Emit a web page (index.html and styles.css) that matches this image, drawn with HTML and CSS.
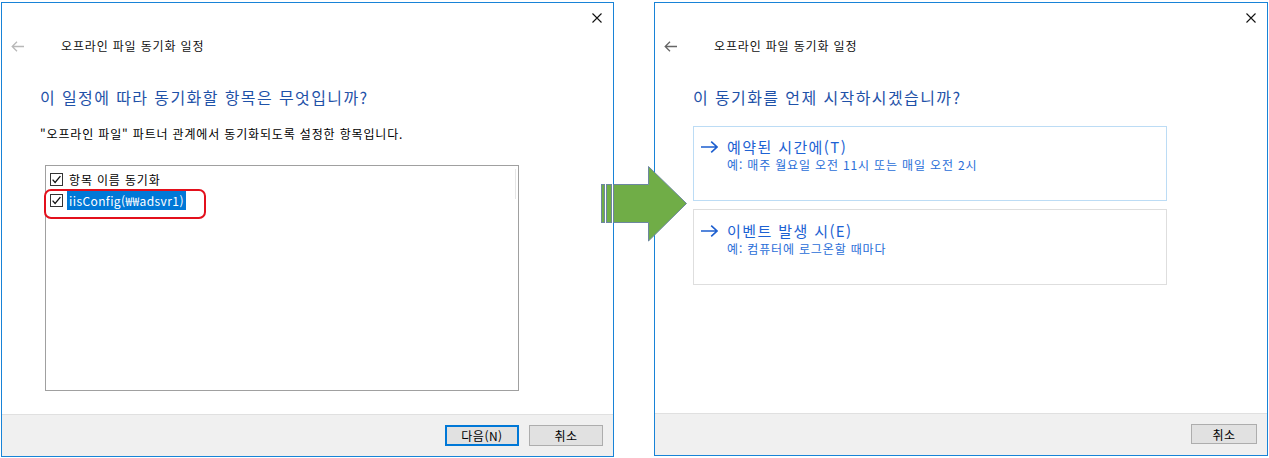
FILE: index.html
```html
<!DOCTYPE html>
<html lang="ko">
<head>
<meta charset="utf-8" />
<title>오프라인 파일 동기화 일정</title>
<link rel="stylesheet" href="styles.css">
</head>
<body>
<div class="dialog left-dlg">
	<div class="topbar">
		<svg class="close" width="10" height="10" viewBox="0 0 10 10"><path d="M0.5 0.5 L9.5 9.5 M9.5 0.5 L0.5 9.5" stroke="#111" stroke-width="1.1" fill="none"/></svg>
	</div>
	<div class="nav">
		<svg class="back off" width="13" height="11" viewBox="0 0 13 11"><path d="M1 5.5 H13 M6 0.8 L1.2 5.5 L6 10.2" fill="none" stroke-width="1.3"/></svg>
		<span class="title">오프라인 파일 동기화 일정</span>
	</div>
	<div class="main">
		<h1>이 일정에 따라 동기화할 항목은 무엇입니까?</h1>
		<p class="desc">"오프라인 파일" 파트너 관계에서 동기화되도록 설정한 항목입니다.</p>
		<div class="list">
			<div class="row">
				<svg class="chk" width="13" height="13" viewBox="0 0 13 13"><rect x="0.5" y="0.5" width="12" height="12" fill="#fff" stroke="#333"/><path d="M2.6 6.6 L5.1 9.4 L10.4 3.2" fill="none" stroke="#111" stroke-width="1.3"/></svg>
				<span class="label">항목 이름 동기화</span>
			</div>
			<div class="row">
				<svg class="chk" width="13" height="13" viewBox="0 0 13 13"><rect x="0.5" y="0.5" width="12" height="12" fill="#fff" stroke="#333"/><path d="M2.6 6.6 L5.1 9.4 L10.4 3.2" fill="none" stroke="#111" stroke-width="1.3"/></svg>
				<span class="label sel">iisConfig(₩₩adsvr1)</span>
			</div>
			<div class="mark"></div>
		</div>
	</div>
	<div class="footer">
		<button class="btn default">다음(N)</button>
		<button class="btn">취소</button>
	</div>
</div>

<div class="dialog right-dlg">
	<div class="topbar">
		<svg class="close" width="10" height="10" viewBox="0 0 10 10"><path d="M0.5 0.5 L9.5 9.5 M9.5 0.5 L0.5 9.5" stroke="#111" stroke-width="1.1" fill="none"/></svg>
	</div>
	<div class="nav">
		<svg class="back" width="13" height="11" viewBox="0 0 13 11"><path d="M1 5.5 H13 M6 0.8 L1.2 5.5 L6 10.2" fill="none" stroke-width="1.3"/></svg>
		<span class="title">오프라인 파일 동기화 일정</span>
	</div>
	<div class="main">
		<h1>이 동기화를 언제 시작하시겠습니까?</h1>
		<div class="opt hover">
			<svg class="go" width="17" height="12" viewBox="0 0 17 12"><path d="M0 6 H16 M10.2 0.6 L16 6 L10.2 11.4" fill="none" stroke-width="1.6"/></svg>
			<div class="opt-text">
				<div class="opt-main">예약된 시간에(T)</div>
				<div class="opt-sub">예: 매주 월요일 오전 11시 또는 매일 오전 2시</div>
			</div>
		</div>
		<div class="opt">
			<svg class="go" width="17" height="12" viewBox="0 0 17 12"><path d="M0 6 H16 M10.2 0.6 L16 6 L10.2 11.4" fill="none" stroke-width="1.6"/></svg>
			<div class="opt-text">
				<div class="opt-main">이벤트 발생 시(E)</div>
				<div class="opt-sub">예: 컴퓨터에 로그온할 때마다</div>
			</div>
		</div>
	</div>
	<div class="footer">
		<button class="btn small">취소</button>
	</div>
</div>

<svg class="bigarrow" width="88" height="78" viewBox="0 0 88 78">
	<rect x="1.5" y="19.5" width="3" height="38" fill="#70ad47" stroke="#6d87a0" stroke-width="1"/>
	<rect x="6.5" y="19.5" width="5" height="38" fill="#70ad47" stroke="#6d87a0" stroke-width="1"/>
	<polygon points="13.5,19.5 48.5,19.5 48.5,1.5 86.5,38.5 48.5,76 48.5,57.5 13.5,57.5" fill="#70ad47" stroke="#6d87a0" stroke-width="1"/>
</svg>
</body>
</html>
```

FILE: styles.css
```css
*{margin:0;padding:0;box-sizing:border-box;}
body{ background:#fff; font-family:"Noto Sans CJK KR","Liberation Sans",sans-serif; font-size:12px; color:#000; display:flex; gap:40px; padding:2px 0 0 1px; position:relative; letter-spacing:0.07em; }

.dialog{ border:1px solid #1883d7; background:#fff; display:flex; flex-direction:column; }
.left-dlg{ width:613px; height:455px; }
.right-dlg{ width:614px; height:454px; }

.topbar{ height:29px; display:flex; justify-content:flex-end; align-items:center; padding-right:11px; }
.nav{ height:28px; display:flex; align-items:center; padding-left:9px; }
.back{ stroke:#666; }
.back.off{ stroke:#b8b8b8; }
.title{ margin-left:37px; font-size:12px; line-height:16px; color:#111; }

.main{ padding-left:38px; }
h1{ font-size:16px; font-weight:normal; line-height:22px; color:#1f52a8; margin-top:26px; letter-spacing:1.4px; }
.desc{ font-size:12px; line-height:16px; margin-top:18px; }

.list{ width:474px; height:226px; margin:23px 0 0 5px; border:1px solid #a0a0a0; padding-top:3px; position:relative; }
.row{ height:21px; display:flex; align-items:center; padding-left:4px; }
.chk{ display:block; flex:none; }
.label{ margin-left:4px; padding:0 2px; line-height:19px; font-size:12px; }
.label.sel{ background:#0078d7; color:#fff; letter-spacing:0.4px; }
.list::after{ content:""; position:absolute; left:469px; top:3px; width:1px; height:30px; background:#e6e6e6; }
.mark{ position:absolute; left:-2px; top:23px; width:162px; height:30px; border:2px solid #e3101c; border-radius:7px; }

.opt{ width:474px; height:75px; margin-top:18px; border:1px solid #e3e3e3; display:flex; align-items:flex-start; padding:10px 0 0 7px; }
.opt + .opt{ margin-top:8px; height:76px; padding-top:11px; border-color:#dedede; }
.opt.hover{ border-color:#bcdcf5; }
.go{ stroke:#1d5fcf; margin-top:4px; flex:none; }
.opt-text{ margin-left:9px; color:#1d62d3; }
.opt-main{ font-size:15px; line-height:20px; letter-spacing:1.4px; }
.opt-sub{ font-size:12px; line-height:16px; color:#2a6ed8; }

.footer{ margin-top:auto; height:42px; background:#f0f0f0; border-top:1px solid #e0e0e0; display:flex; justify-content:flex-end; align-items:flex-start; gap:10px; padding:10px 10px 0 0; }
.btn{ width:74px; height:21px; background:#e1e1e1; border:1px solid #adadad; font-family:inherit; font-size:12px; color:#000; letter-spacing:0.5px; }
.btn.default{ border:2px solid #0078d7; }
.btn.small{ width:66px; height:20px; }

.bigarrow{ position:absolute; left:600px; top:165px; }
```
